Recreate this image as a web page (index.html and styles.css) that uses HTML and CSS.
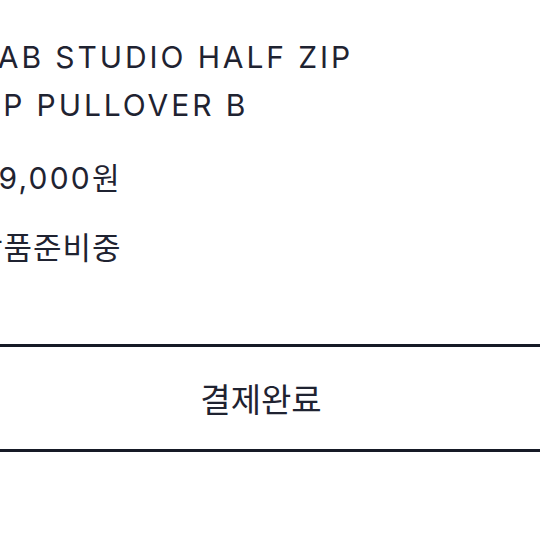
FILE: index.html
```html
<!DOCTYPE html>
<html lang="ko">
<head>
  <meta charset="UTF-8" />
  <meta name="viewport" content="width=device-width, initial-scale=1.0"/>
  <title>주문 상세</title>
  <link rel="stylesheet" href="styles.css">
</head>
<body>
  <main class="order">
    <div class="order-item">
      <p class="item-name">LAB STUDIO HALF ZIP UP PULLOVER B</p>
      <p class="item-price">59,000원</p>
      <p class="item-status">상품준비중</p>
    </div>
    <button class="order-action" type="button">결제완료</button>
  </main>
</body>
</html>
```

FILE: styles.css
```css
body {
  margin: 0;
  overflow: hidden;
  background: #fff;
  color: #1f2331;
  font-family: Inter, "Noto Sans CJK KR", sans-serif;
}

.order {
  margin: 0 -4px 0 -22px;
  padding-top: 33px;
}

.item-name {
  margin: 0;
  max-width: 400px;
  font-size: 30px;
  line-height: 48px;
  letter-spacing: 2.9px;
}

.item-price {
  margin: 25px 0 0;
  font-size: 30px;
  line-height: 48px;
  letter-spacing: 2.2px;
}

.item-status {
  margin: 22px 0 0 -4px;
  font-size: 31px;
  line-height: 48px;
  letter-spacing: 1px;
}

.order-action {
  display: block;
  width: 100%;
  height: 108px;
  margin-top: 72px;
  padding: 0;
  border: none;
  border-top: 3px solid #161a26;
  border-bottom: 3px solid #161a26;
  background: #fff;
  color: #1f2331;
  font-family: Inter, "Noto Sans CJK KR", sans-serif;
  font-size: 33px;
  cursor: pointer;
}
```
